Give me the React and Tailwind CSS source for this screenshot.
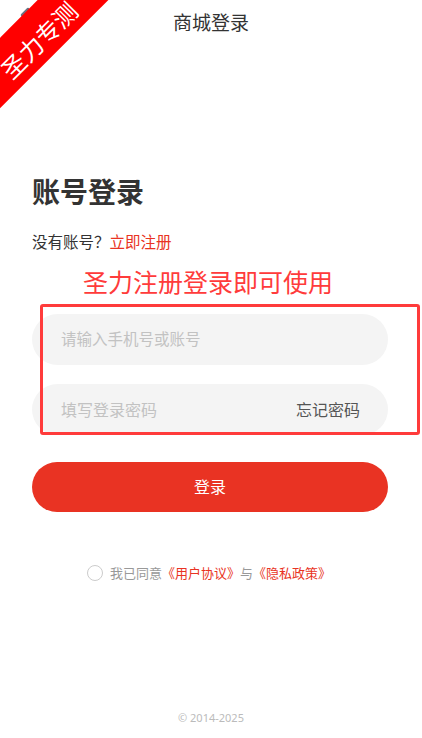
import { ChevronLeft } from "lucide-react";

const App = () => {
  return (
    <div className="relative min-h-[738px] bg-white overflow-hidden font-['Noto_Sans','Noto_Sans_CJK_SC',sans-serif]">
      {/* Header */}
      <div className="relative h-[46px] flex items-center justify-center">
        <ChevronLeft className="absolute left-[13px] top-[3px] text-gray-500" size={24} strokeWidth={2.5} />
        <div className="text-[19px] text-[#333]">商城登录</div>
      </div>

      {/* Ribbon */}
      <div className="absolute left-[-64px] top-[12px] w-[200px] h-[50px] bg-[#ff0000] text-white text-[24px] leading-[40px] pt-[10px] text-center -rotate-45">
        圣力专测
      </div>

      <div className="px-[32px] pt-[128px]">
        <h1 className="text-[28px] font-bold text-[#333] leading-[36px]">账号登录</h1>
        <div className="mt-[21px] text-[15.5px] text-[#333] leading-[22px]">
          没有账号？<span className="text-[#e93323]">立即注册</span>
        </div>

        <div className="mt-[13px] pl-[51px] text-[25px] leading-[32px] text-[#ff3b3b]">圣力注册登录即可使用</div>

        <div className="relative mt-[16px] w-[356px]">
          <div className="flex flex-col gap-[19px]">
            <div className="h-[51px] rounded-full bg-[#f4f4f4] flex items-center pl-[29px] text-[15.5px] text-[#c2c2c2]">
              请输入手机号或账号
            </div>
            <div className="h-[51px] rounded-full bg-[#f4f4f4] flex items-center justify-between pl-[29px] pr-[28px] text-[16px]">
              <span className="text-[#c2c2c2]">填写登录密码</span>
              <span className="text-[#555]">忘记密码</span>
            </div>
          </div>
          <div className="absolute left-[8px] top-[-10px] w-[380px] h-[131px] border-[3px] border-[#ff3b3b] rounded-[3px]" />
        </div>

        <button className="mt-[27px] w-[356px] h-[50px] rounded-full bg-[#e93323] text-white text-[16px]">登录</button>

        <div className="mt-[51px] flex items-center justify-center pr-[4px] text-[13px] leading-[20px] text-[#999]">
          <span className="w-[16px] h-[16px] rounded-full border border-[#ccc] mr-[7px]" />
          我已同意<span className="text-[#e93323]">《用户协议》</span>与<span className="text-[#e93323]">《隐私政策》</span>
        </div>
      </div>

      <div className="absolute left-0 right-0 top-[710px] text-center text-[11px] text-[#bbb]">© 2014-2025</div>
    </div>
  );
};

export default App;
